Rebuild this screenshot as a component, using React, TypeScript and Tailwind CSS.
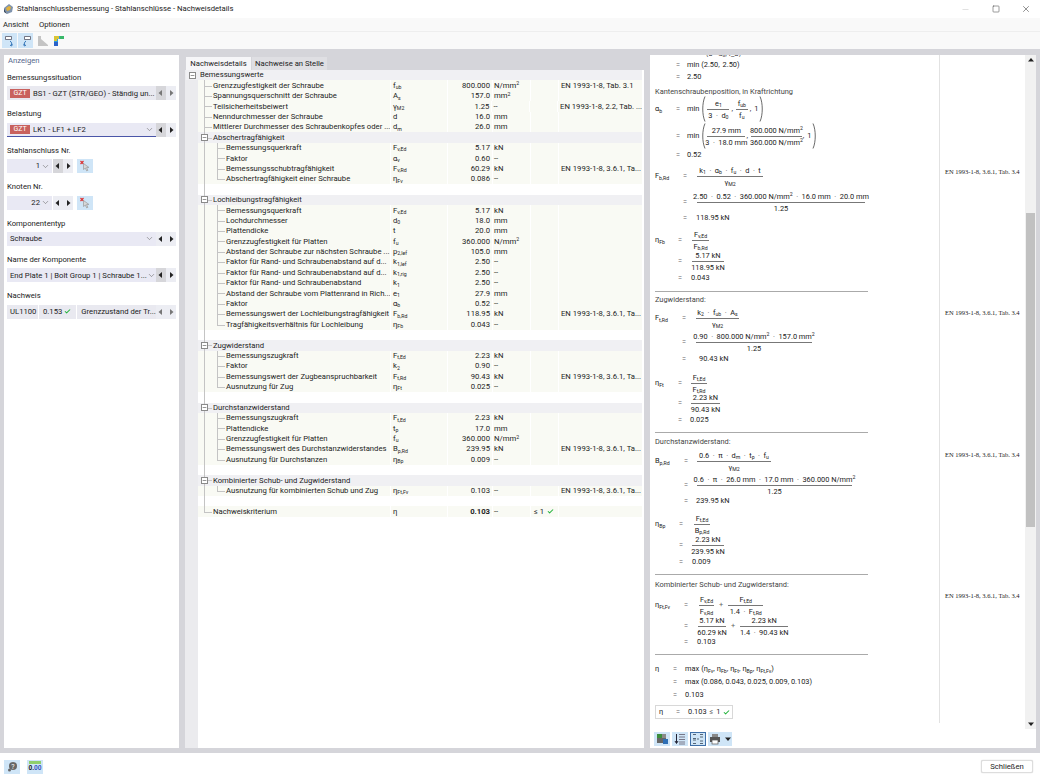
import React from 'react';
import { ChevronDown, Check, Minus, Square, X } from 'lucide-react';

// ─── Small helpers ───

const S = ({ b, s, className = '' }: { b: string; s?: string; className?: string }) => (
  <span className={className}>
    {b}
    {s && <sub className="text-[5.2px]">{s}</sub>}
  </span>
);

const Mm2 = () => (
  <span>
    N/mm<sup className="text-[5.2px]">2</sup>
  </span>
);

const Mm2Val = ({ v }: { v: string }) => (
  <span>
    {v} N/mm<sup className="text-[5.2px]">2</sup>
  </span>
);

const Tri = ({ dir, dim }: { dir: 'l' | 'r' | 'u' | 'd'; dim?: boolean }) => {
  const pts = { l: '5,1 5,7 1.5,4', r: '3,1 3,7 6.5,4', u: '1,5.5 7,5.5 4,2', d: '1,2.5 7,2.5 4,6' }[dir];
  return (
    <svg width="8" height="8" viewBox="0 0 8 8">
      <polygon points={pts} fill={dim ? '#777' : '#222'} />
    </svg>
  );
};

const Tick = ({ className = '' }: { className?: string }) => (
  <Check className={`h-[7px] w-[7px] shrink-0 text-[#22b33a] ${className}`} strokeWidth={3.5} />
);

// ─── Left panel ───

const Arrows = ({ dim, shaded }: { dim?: boolean; shaded?: boolean }) => (
  <div className="flex h-full">
    <div className={`flex w-[10px] items-center justify-center ${shaded ? 'bg-[#d6d6da]' : 'bg-[#ecedf3]'}`}>
      <Tri dir="l" dim={dim} />
    </div>
    <div className="flex w-[10px] items-center justify-center bg-[#ecedf3]">
      <Tri dir="r" dim={dim} />
    </div>
  </div>
);

const Gzt = () => (
  <span className="mr-[3px] flex h-[9px] w-[20px] shrink-0 items-center justify-center bg-[#c9615d] text-[7px] text-white">GZT</span>
);

const Chev = () => <ChevronDown className="h-[9px] w-[9px] shrink-0 text-[#666]" strokeWidth={1.5} />;

const PickBtn = () => (
  <div className="ml-[4px] flex h-full w-[16px] items-center justify-center bg-[#cfe5f7]">
    <svg width="12" height="12" viewBox="0 0 12 12">
      <path d="M1.500 1l3 3M4.500 1l-3 3" stroke="#d33" strokeWidth="1.200" />
      <path d="M4.500 3.500v6l1.800-1.400 1.400 2.800 1.200-.6-1.400-2.700 2.400-.2z" fill="#d8d8d8" stroke="#999" strokeWidth=".7" />
    </svg>
  </div>
);

const Field = ({ label, children }: { label: string; children: React.ReactNode }) => (
  <div className="h-[36.4px]">
    <div className="h-[14.4px] leading-[11px]">{label}</div>
    <div className="flex h-[14px] whitespace-nowrap">{children}</div>
  </div>
);

const LeftPanel = () => (
  <aside className="w-[175px] bg-white pl-[3px] pr-[3px] pt-[1px]">
    <div className="h-[16px] pl-[1px] leading-[10px] text-[#56688c]">Anzeigen</div>
    <Field label="Bemessungssituation">
      <div className="flex w-[149px] items-center bg-[#e9e9f0] pl-[3px]">
        <Gzt />
        <span>BS1 - GZT (STR/GEO) - Ständig un...</span>
      </div>
      <Arrows dim shaded />
    </Field>
    <Field label="Belastung">
      <div className="flex w-[149px] items-center justify-between border-b border-[#4a55a8] bg-[#e9e9f4] pl-[3px] pr-[2px]">
        <div className="flex items-center">
          <Gzt />
          <span>LK1 - LF1 + LF2</span>
        </div>
        <Chev />
      </div>
      <Arrows shaded />
    </Field>
    <Field label="Stahlanschluss Nr.">
      <div className="flex w-[45px] items-center justify-end bg-[#e9e9f4] pr-[2px]">
        <span className="mr-[1px]">1</span>
        <Chev />
      </div>
      <div className="w-[1px]" />
      <Arrows shaded />
      <PickBtn />
    </Field>
    <Field label="Knoten Nr.">
      <div className="flex w-[45px] items-center justify-end bg-[#e9e9f4] pr-[2px]">
        <span className="mr-[1px]">22</span>
        <Chev />
      </div>
      <div className="w-[1px]" />
      <Arrows />
      <PickBtn />
    </Field>
    <Field label="Komponententyp">
      <div className="flex w-[149px] items-center justify-between bg-[#e9e9f4] pl-[3px] pr-[2px]">
        <span>Schraube</span>
        <Chev />
      </div>
      <Arrows />
    </Field>
    <Field label="Name der Komponente">
      <div className="flex w-[149px] items-center justify-between bg-[#e9e9f4] pl-[3px] pr-[2px]">
        <span>End Plate 1 | Bolt Group 1 | Schraube 1...</span>
        <Chev />
      </div>
      <Arrows shaded />
    </Field>
    <Field label="Nachweis">
      <div className="flex w-[149px] items-center bg-[#e9e9f0]">
        <span className="h-full w-[32px] border-r border-white pl-[3px] leading-[14px]">UL1100</span>
        <span className="ml-[4px]">0.153</span>
        <Tick className="ml-[2px]" />
        <span className="ml-[5px] h-full border-l border-white pl-[4px] leading-[14px]">Grenzzustand der Tr...</span>
      </div>
      <Arrows dim />
    </Field>
  </aside>
);

// ─── Result tree ───

type Row = {
  kind: 'group' | 'item' | 'blank' | 'root';
  name?: string;
  sym?: React.ReactNode;
  val?: string;
  unit?: React.ReactNode;
  ref?: string;
  last?: boolean;
  bold?: boolean;
  limit?: boolean;
};

const item = (name: string, sym: React.ReactNode, val: string, unit: React.ReactNode, ref?: string, last?: boolean): Row => ({
  kind: 'item', name, sym, val, unit, ref, last,
});
const group = (name: string): Row => ({ kind: 'group', name });
const blank: Row = { kind: 'blank' };
const REF = 'EN 1993-1-8, 3.6.1, Ta...';

const rows: Row[] = [
  { kind: 'root', name: 'Grenzzugfestigkeit der Schraube', sym: <S b="f" s="ub" />, val: '800.000', unit: <Mm2 />, ref: 'EN 1993-1-8, Tab. 3.1' },
  { kind: 'root', name: 'Spannungsquerschnitt der Schraube', sym: <S b="A" s="s" />, val: '157.0', unit: <span>mm<sup className="text-[5.2px]">2</sup></span> },
  { kind: 'root', name: 'Teilsicherheitsbeiwert', sym: <S b="γ" s="M2" />, val: '1.25', unit: '--', ref: 'EN 1993-1-8, 2.2, Tab. ...' },
  { kind: 'root', name: 'Nenndurchmesser der Schraube', sym: 'd', val: '16.0', unit: 'mm' },
  { kind: 'root', name: 'Mittlerer Durchmesser des Schraubenkopfes oder ...', sym: <S b="d" s="m" />, val: '26.0', unit: 'mm' },
  group('Abschertragfähigkeit'),
  item('Bemessungsquerkraft', <S b="F" s="v,Ed" />, '5.17', 'kN'),
  item('Faktor', <S b="α" s="v" />, '0.60', '--'),
  item('Bemessungsschubtragfähigkeit', <S b="F" s="v,Rd" />, '60.29', 'kN', REF),
  item('Abschertragfähigkeit einer Schraube', <S b="η" s="Fv" />, '0.086', '--', undefined, true),
  blank,
  group('Lochleibungstragfähigkeit'),
  item('Bemessungsquerkraft', <S b="F" s="v,Ed" />, '5.17', 'kN'),
  item('Lochdurchmesser', <S b="d" s="0" />, '18.0', 'mm'),
  item('Plattendicke', 't', '20.0', 'mm'),
  item('Grenzzugfestigkeit für Platten', <S b="f" s="u" />, '360.000', <Mm2 />),
  item('Abstand der Schraube zur nächsten Schraube ...', <S b="p" s="2,lef" />, '105.0', 'mm'),
  item('Faktor für Rand- und Schraubenabstand auf d...', <S b="k" s="1,lef" />, '2.50', '--'),
  item('Faktor für Rand- und Schraubenabstand auf d...', <S b="k" s="1,rig" />, '2.50', '--'),
  item('Faktor für Rand- und Schraubenabstand', <S b="k" s="1" />, '2.50', '--'),
  item('Abstand der Schraube vom Plattenrand in Rich...', <S b="e" s="1" />, '27.9', 'mm'),
  item('Faktor', <S b="α" s="b" />, '0.52', '--'),
  item('Bemessungswert der Lochleibungstragfähigkeit', <S b="F" s="b,Rd" />, '118.95', 'kN', REF),
  item('Tragfähigkeitsverhältnis für Lochleibung', <S b="η" s="Fb" />, '0.043', '--', undefined, true),
  blank,
  group('Zugwiderstand'),
  item('Bemessungszugkraft', <S b="F" s="t,Ed" />, '2.23', 'kN'),
  item('Faktor', <S b="k" s="2" />, '0.90', '--'),
  item('Bemessungswert der Zugbeanspruchbarkeit', <S b="F" s="t,Rd" />, '90.43', 'kN', REF),
  item('Ausnutzung für Zug', <S b="η" s="Ft" />, '0.025', '--', undefined, true),
  blank,
  group('Durchstanzwiderstand'),
  item('Bemessungszugkraft', <S b="F" s="t,Ed" />, '2.23', 'kN'),
  item('Plattendicke', <S b="t" s="p" />, '17.0', 'mm'),
  item('Grenzzugfestigkeit für Platten', <S b="f" s="u" />, '360.000', <Mm2 />),
  item('Bemessungswert des Durchstanzwiderstandes', <S b="B" s="p,Rd" />, '239.95', 'kN', REF),
  item('Ausnutzung für Durchstanzen', <S b="η" s="Bp" />, '0.009', '--', undefined, true),
  blank,
  group('Kombinierter Schub- und Zugwiderstand'),
  item('Ausnutzung für kombinierten Schub und Zug', <S b="η" s="Ft,Fv" />, '0.103', '--', REF, true),
  blank,
  { kind: 'root', name: 'Nachweiskriterium', sym: 'η', val: '0.103', unit: '--', bold: true, limit: true, last: true },
];

const Toggle = () => (
  <span className="relative z-10 flex h-[7px] w-[7px] items-center justify-center border border-[#8a8a8a] bg-white">
    <Minus className="h-[5px] w-[5px] text-[#333]" strokeWidth={2.5} />
  </span>
);

// one tree guide column, 13px wide, with the vertical line at 6px
const Guide = ({ end, branch, children }: { end?: boolean; branch?: boolean; children?: React.ReactNode }) => (
  <span className="relative flex h-full w-[13px] shrink-0 items-center justify-center">
    <span className={`absolute left-[6px] top-0 w-px bg-[#c4c4c4] ${end ? 'h-1/2' : 'h-full'}`} />
    {branch && <span className="absolute left-[6px] top-1/2 h-px w-[8px] bg-[#c4c4c4]" />}
    {children}
  </span>
);

const TreeRow = ({ row }: { row: Row }) => {
  if (row.kind === 'blank') {
    return (
      <div className="h-[10.4px]">
        <Guide />
      </div>
    );
  }
  if (row.kind === 'group') {
    return (
      <div className="flex h-[10.4px] items-center bg-[#f0f0f3]">
        <Guide branch>
          <Toggle />
        </Guide>
        <span className="ml-[2px] whitespace-nowrap">{row.name}</span>
      </div>
    );
  }
  const cell = 'border-l border-white h-full flex items-center';
  return (
    <div className="flex h-[10.4px] items-center bg-[#f9faf4]">
      <div className="flex h-full w-[192px] shrink-0 items-center">
        <Guide end={row.kind === 'root' && row.last} branch={row.kind === 'root'} />
        {row.kind === 'item' && <Guide end={row.last} branch />}
        <span className="ml-[2px] whitespace-nowrap">{row.name}</span>
      </div>
      <div className={`${cell} w-[57px] pl-[2px]`}>{row.sym}</div>
      <div className={`${cell} w-[45px] justify-end pr-[2px] ${row.bold ? 'font-bold' : ''}`}>{row.val}</div>
      <div className={`${cell} w-[38px] pl-[1px]`}>{row.unit}</div>
      <div className={`${cell} w-[28px] pl-[3px]`}>
        {row.limit && (
          <>
            ≤ 1
            <Tick className="ml-[3px]" />
          </>
        )}
      </div>
      <div className={`${cell} flex-1 whitespace-nowrap pl-[2px]`}>{row.ref}</div>
    </div>
  );
};

const MiddlePanel = () => (
  <section className="flex w-[459px] flex-col">
    <div className="flex h-[15px] items-end whitespace-nowrap pl-[1px]">
      <div className="flex h-[13px] w-[65px] items-center justify-center bg-[#f6f6f8]">Nachweisdetails</div>
      <div className="ml-[1px] flex h-[13px] w-[75px] items-center justify-center bg-[#dfdfe3]">Nachweise an Stelle</div>
    </div>
    <div className="flex flex-1 bg-white">
      <div className="w-[13px] bg-[#ebebee]" />
      <div className="w-[444px]">
        {/* the first header starts in the gutter */}
        <div className="-ml-[12px] flex h-[10.4px] items-center bg-[#f0f0f3] pl-[3px]">
          <Toggle />
          <span className="ml-[4px]">Bemessungswerte</span>
        </div>
        {rows.map((r, i) => (
          <TreeRow key={i} row={r} />
        ))}
      </div>
    </div>
  </section>
);

// ─── Formula view ───

const Frac = ({ n, d, w }: { n: React.ReactNode; d: React.ReactNode; w: string }) => (
  <span className={`inline-flex shrink-0 flex-col items-center ${w}`}>
    <span className="h-[10px] whitespace-nowrap leading-[10px]">{n}</span>
    <span className="h-px w-full bg-[#777]" />
    <span className="h-[10px] whitespace-nowrap leading-[12px]">{d}</span>
  </span>
);

const Line = ({ mt, a, b, sym, children }: { mt: string; a: string; b: string; sym?: React.ReactNode; children: React.ReactNode }) => (
  <div className={`flex h-0 items-center whitespace-nowrap ${mt}`}>
    <span className={`shrink-0 ${a}`}>{sym}</span>
    <span className={`shrink-0 text-[#666] ${b}`}>=</span>
    {children}
  </div>
);

const Note = ({ mt, children }: { mt: string; children: React.ReactNode }) => (
  <div className={`flex h-0 items-center whitespace-nowrap text-[#444] ${mt}`}>{children}</div>
);

const Hr = ({ mt }: { mt: string }) => <div className={`h-px w-[213px] bg-[#aaa] ${mt}`} />;

const Dot = () => <span className="mx-[3.5px] text-[#666]">·</span>;

const Comma = () => <span className="mr-[3px]">,</span>;

const Paren = ({ flip }: { flip?: boolean }) => (
  <svg width="5" height="26" viewBox="0 0 5 26" className={`shrink-0 ${flip ? '-scale-x-100' : ''}`}>
    <path d="M4 .5C1 7 1 19 4 25.500" fill="none" stroke="#444" strokeWidth=".8" />
  </svg>
);

const Sub = ({ children }: { children: string }) => <sub className="text-[5.2px]">{children}</sub>;

const Formulas = () => (
  <div className="w-[289px] overflow-hidden pl-[5px] text-[7.4px] text-[#222]">
    <div className="flex h-[2px] items-end overflow-hidden pl-[51px] leading-none text-[#444]">(3 · d₀, f_u)</div>
    <Line mt="mt-[8px]" a="w-[21px]" b="w-[11px]">min (2.50,<span className="ml-[3px]">2.50)</span></Line>
    <Line mt="mt-[12px]" a="w-[21px]" b="w-[11px]">2.50</Line>
    <Note mt="mt-[15px]">Kantenschraubenposition, in Kraftrichtung</Note>

    <Line mt="mt-[17px]" a="w-[21px]" b="w-[11px]" sym={<S b="α" s="b" />}>
      min
      <span className="ml-[2px]" />
      <Paren />
      <span className="ml-[1px]" />
      <Frac w="w-[22px]" n={<S b="e" s="1" />} d={<span>3<Dot /><S b="d" s="0" /></span>} />
      <span className="ml-[2px]" /><Comma />
      <Frac w="w-[12px]" n={<S b="f" s="ub" />} d={<S b="f" s="u" />} />
      <span className="ml-[2px]" /><Comma />1
      <span className="ml-[1px]" />
      <Paren flip />
    </Line>
    <Line mt="mt-[27px]" a="w-[21px]" b="w-[11px]">
      min
      <span className="ml-[2px]" />
      <Paren />
      <span className="ml-[1px]" />
      <Frac w="w-[38px]" n="27.9 mm" d={<span>3<Dot />18.0 mm</span>} />
      <span className="ml-[1px]" /><Comma />
      <Frac w="w-[51px]" n={<Mm2Val v="800.000" />} d={<Mm2Val v="360.000" />} />
      <span className="ml-[1px]" /><Comma />1
      <span className="ml-[1px]" />
      <Paren flip />
    </Line>
    <Line mt="mt-[19px]" a="w-[21px]" b="w-[11px]">0.52</Line>

    <Line mt="mt-[21px]" a="w-[28px]" b="w-[14px]" sym={<S b="F" s="b,Rd" />}>
      <Frac w="w-[66px]" n={<span>k<Sub>1</Sub><Dot />α<Sub>b</Sub><Dot />f<Sub>u</Sub><Dot />d<Dot />t</span>} d={<S b="γ" s="M2" />} />
    </Line>
    <Line mt="mt-[26px]" a="w-[28px]" b="w-[14px]">
      <Frac w="w-[168px]" n={<span>2.50<Dot />0.52<Dot /><Mm2Val v="360.000" /><Dot />16.0 mm<Dot />20.0 mm</span>} d="1.25" />
    </Line>
    <Line mt="mt-[16px]" a="w-[28px]" b="w-[13px]">118.95 kN</Line>

    <Line mt="mt-[22px]" a="w-[23px]" b="w-[14px]" sym={<S b="η" s="Fb" />}>
      <Frac w="w-[17px]" n={<S b="F" s="v,Ed" />} d={<S b="F" s="b,Rd" />} />
    </Line>
    <Line mt="mt-[21px]" a="w-[23px]" b="w-[14px]">
      <Frac w="w-[32px]" n="5.17 kN" d="118.95 kN" />
    </Line>
    <Line mt="mt-[17px]" a="w-[23px]" b="w-[13px]">0.043</Line>
    <Hr mt="mt-[13px]" />

    <Note mt="mt-[8px]">Zugwiderstand:</Note>
    <Line mt="mt-[18px]" a="w-[27px]" b="w-[14px]" sym={<S b="F" s="t,Rd" />}>
      <Frac w="w-[43px]" n={<span>k<Sub>2</Sub><Dot />f<Sub>ub</Sub><Dot />A<Sub>s</Sub></span>} d={<S b="γ" s="M2" />} />
    </Line>
    <Line mt="mt-[24px]" a="w-[27px]" b="w-[14px]">
      <Frac w="w-[116px]" n={<span>0.90<Dot /><Mm2Val v="800.000" /><Dot />157.0 mm<sup className="text-[5.2px]">2</sup></span>} d="1.25" />
    </Line>
    <Line mt="mt-[17px]" a="w-[27px]" b="w-[17px]">90.43 kN</Line>

    <Line mt="mt-[24px]" a="w-[23px]" b="w-[13px]" sym={<S b="η" s="Ft" />}>
      <Frac w="w-[16px]" n={<S b="F" s="t,Ed" />} d={<S b="F" s="t,Rd" />} />
    </Line>
    <Line mt="mt-[20px]" a="w-[23px]" b="w-[13px]">
      <Frac w="w-[29px]" n="2.23 kN" d="90.43 kN" />
    </Line>
    <Line mt="mt-[17px]" a="w-[23px]" b="w-[12px]">0.025</Line>
    <Hr mt="mt-[12px]" />

    <Note mt="mt-[9px]">Durchstanzwiderstand:</Note>
    <Line mt="mt-[19px]" a="w-[29px]" b="w-[13px]" sym={<S b="B" s="p,Rd" />}>
      <Frac w="w-[74px]" n={<span>0.6<Dot />π<Dot />d<Sub>m</Sub><Dot />t<Sub>p</Sub><Dot />f<Sub>u</Sub></span>} d={<S b="γ" s="M2" />} />
    </Line>
    <Line mt="mt-[24px]" a="w-[29px]" b="w-[13px]">
      <Frac w="w-[155px]" n={<span>0.6<Dot />π<Dot />26.0 mm<Dot />17.0 mm<Dot /><Mm2Val v="360.000" /></span>} d="1.25" />
    </Line>
    <Line mt="mt-[16px]" a="w-[29px]" b="w-[12px]">239.95 kN</Line>

    <Line mt="mt-[23px]" a="w-[24px]" b="w-[15px]" sym={<S b="η" s="Bp" />}>
      <Frac w="w-[16px]" n={<S b="F" s="t,Ed" />} d={<S b="B" s="p,Rd" />} />
    </Line>
    <Line mt="mt-[21px]" a="w-[24px]" b="w-[13px]">
      <Frac w="w-[32px]" n="2.23 kN" d="239.95 kN" />
    </Line>
    <Line mt="mt-[17px]" a="w-[24px]" b="w-[13px]">0.009</Line>
    <Hr mt="mt-[12px]" />

    <Note mt="mt-[10px]">Kombinierter Schub- und Zugwiderstand:</Note>
    <Line mt="mt-[20px]" a="w-[29px]" b="w-[15px]" sym={<S b="η" s="Ft,Fv" />}>
      <Frac w="w-[15px]" n={<S b="F" s="v,Ed" />} d={<S b="F" s="v,Rd" />} />
      <span className="mx-[5px] text-[#666]">+</span>
      <Frac w="w-[35px]" n={<S b="F" s="t,Ed" />} d={<span>1.4<Dot /><S b="F" s="t,Rd" /></span>} />
    </Line>
    <Line mt="mt-[21px]" a="w-[29px]" b="w-[14px]">
      <Frac w="w-[28px]" n="5.17 kN" d="60.29 kN" />
      <span className="mx-[5px] text-[#666]">+</span>
      <Frac w="w-[48px]" n="2.23 kN" d={<span>1.4<Dot />90.43 kN</span>} />
    </Line>
    <Line mt="mt-[16px]" a="w-[29px]" b="w-[13px]">0.103</Line>
    <Hr mt="mt-[12px]" />

    <Line mt="mt-[14px]" a="w-[18px]" b="w-[12px]" sym="η">
      max
      <span className="ml-[2px]">
        (<S b="η" s="Fv" />,<span className="ml-[2px]"><S b="η" s="Fb" /></span>,<span className="ml-[2px]"><S b="η" s="Ft" /></span>,<span className="ml-[2px]"><S b="η" s="Bp" /></span>,<span className="ml-[2px]"><S b="η" s="Ft,Fv" /></span>)
      </span>
    </Line>
    <Line mt="mt-[13px]" a="w-[18px]" b="w-[12px]">max (0.086,  0.043,  0.025,  0.009,  0.103)</Line>
    <Line mt="mt-[13px]" a="w-[18px]" b="w-[12px]">0.103</Line>
    <div className="mt-[10px] flex h-[14px] w-[78px] items-center whitespace-nowrap border border-[#d8d8d8] pl-[3px]">
      <span className="w-[17px]">η</span>
      <span className="w-[12px] text-[#666]">=</span>
      <span>0.103</span>
      <span className="mx-[3px] text-[#666]">≤</span>
      <span>1</span>
      <Tick className="ml-[2px]" />
    </div>
  </div>
);

const RefCol = () => (
  <div className="h-[668px] w-[86px] border-l border-[#e2e2e2] pl-[5px] font-['Liberation_Serif',serif] text-[6.5px] text-[#222]">
    <div className="mt-[117px] flex h-0 items-center whitespace-nowrap">EN 1993-1-8, 3.6.1, Tab. 3.4</div>
    <div className="mt-[141px] flex h-0 items-center whitespace-nowrap">EN 1993-1-8, 3.6.1, Tab. 3.4</div>
    <div className="mt-[142px] flex h-0 items-center whitespace-nowrap">EN 1993-1-8, 3.6.1, Tab. 3.4</div>
    <div className="mt-[141px] flex h-0 items-center whitespace-nowrap">EN 1993-1-8, 3.6.1, Tab. 3.4</div>
  </div>
);

const Scrollbar = () => (
  <div className="flex h-[674px] w-[11px] flex-col items-center bg-[#f1f1f1]">
    <div className="flex h-[10px] items-center">
      <Tri dir="u" />
    </div>
    <div className="mt-[148px] h-[314px] w-[9px] bg-[#c1c1c1]" />
    <div className="flex-1" />
    <div className="flex h-[10px] items-center">
      <Tri dir="d" />
    </div>
  </div>
);

const ToolIcon = ({ active, wide, children }: { active?: boolean; wide?: boolean; children: React.ReactNode }) => (
  <div className={`mr-[2px] flex h-[14px] items-center justify-center bg-[#cfe5f7] ${wide ? 'w-[24px]' : 'w-[16px]'} ${active ? 'border border-[#3f6fa8]' : ''}`}>
    {children}
  </div>
);

const RightPanel = () => (
  <section className="flex w-[386px] flex-col bg-white">
    <div className="flex overflow-hidden">
      <Formulas />
      <RefCol />
      <Scrollbar />
    </div>
    <div className="flex pl-[4px] pt-[3px]">
      <ToolIcon>
        <svg width="13" height="12" viewBox="0 0 13 12">
          <rect x="1" y="1" width="5" height="4" fill="#3c8d3c" />
          <rect x="6" y="1" width="4" height="4" fill="#8a8a8a" />
          <rect x="1" y="5" width="9" height="5" fill="#666" />
          <rect x="7" y="6" width="5" height="5" fill="#2f6fb5" />
        </svg>
      </ToolIcon>
      <ToolIcon>
        <svg width="12" height="12" viewBox="0 0 12 12" stroke="#778" strokeWidth="1">
          <path d="M5 1.500h6M5 4h6M5 6.500h6M5 9h6M5 11h6" />
          <path d="M2.500 1v9" stroke="#223" />
          <path d="M1 8l1.500 2.500L4 8" fill="none" stroke="#223" />
        </svg>
      </ToolIcon>
      <ToolIcon active>
        <svg width="12" height="12" viewBox="0 0 12 12" stroke="#567" strokeWidth="1" fill="none">
          <path d="M1 1.500h3M1 5.500h3M1 7h3M1 10.500h3M8 1.500h3M8 4h3M8 8h3M8 10.500h3" />
          <path d="M5 6h2" />
        </svg>
      </ToolIcon>
      <ToolIcon wide>
        <svg width="12" height="12" viewBox="0 0 12 12">
          <rect x="3" y="1" width="6" height="3" fill="#888" />
          <rect x="1" y="4" width="10" height="5" fill="#555" />
          <rect x="3" y="7" width="6" height="4" fill="#fff" stroke="#555" strokeWidth=".7" />
        </svg>
        <span className="ml-[3px]">
          <Tri dir="d" />
        </span>
      </ToolIcon>
    </div>
  </section>
);

// ─── App ───

export default function App() {
  return (
    <div className="flex h-[780px] w-[1040px] flex-col overflow-hidden bg-white font-['Roboto',sans-serif] text-[7.7px] text-[#1c1c1c]">
      <header className="flex h-[18px] items-center justify-between bg-white pl-[3px]">
        <div className="flex items-center">
          <svg width="11" height="11" viewBox="0 0 11 11">
            <path d="M1 5l5-4 4 3-1 5-5 2z" fill="#7f93ad" />
            <path d="M3 5l3-2 2 1-1 3-3 1z" fill="#e3b23c" />
            <path d="M1 5l3 6-3-2z" fill="#3d4f66" />
          </svg>
          <span className="ml-[3px]">Stahlanschlussbemessung - Stahlanschlüsse - Nachweisdetails</span>
        </div>
        <div className="flex items-center">
          <Minus className="mr-[22px] h-[9px] w-[9px] text-[#bbb]" strokeWidth={1.2} />
          <Square className="mr-[21px] h-[8px] w-[8px] text-[#444]" strokeWidth={1.6} />
          <X className="mr-[9px] h-[10px] w-[10px] text-[#444]" strokeWidth={1.4} />
        </div>
      </header>
      <nav className="flex h-[13px] items-center bg-[#f9f9f9] pl-[3px]">
        <span>Ansicht</span>
        <span className="ml-[10px]">Optionen</span>
      </nav>
      <div className="flex h-[18px] items-center border-t border-[#eeeeee] bg-[#f9f9f9] pl-[2px]">
        <div className="flex h-[15px] w-[15px] items-center justify-center bg-[#cfe5f7]">
          <svg width="12" height="12" viewBox="0 0 12 12" fill="none">
            <path d="M1.500 1.500h6v3h-6z" fill="#fff" stroke="#556" strokeWidth=".8" />
            <path d="M6 6c1.500 1 2 2.500 1.500 4M6 10l1.500 1 1-1.500" stroke="#2a6fb5" strokeWidth="1" />
          </svg>
        </div>
        <div className="ml-px flex h-[15px] w-[15px] items-center justify-center bg-[#cfe5f7]">
          <svg width="12" height="12" viewBox="0 0 12 12" fill="none">
            <path d="M4.500 1.500h6v3h-6z" fill="#fff" stroke="#556" strokeWidth=".8" />
            <path d="M6 6C4.500 7 4 8.500 4.500 10M6 10l-1.500 1-1-1.500" stroke="#2a6fb5" strokeWidth="1" />
          </svg>
        </div>
        <div className="ml-[4px] flex h-[15px] w-[12px] items-center justify-center">
          <svg width="12" height="12" viewBox="0 0 12 12">
            <path d="M1 1h3v3l7 6v1H1z" fill="#c4c4c4" />
          </svg>
        </div>
        <div className="ml-[4px] flex h-[15px] w-[12px] items-center justify-center">
          <svg width="12" height="12" viewBox="0 0 12 12">
            <path d="M1 1h10v3H5v7H1z" fill="#2f9fd8" />
            <path d="M1 1h5v3H4v2H1z" fill="#d9c436" />
            <path d="M1 7h4v4H1z" fill="#2b62c9" />
            <path d="M7 1h4v3H7z" fill="#39b86a" />
          </svg>
        </div>
      </div>
      <main className="flex flex-1 gap-[6px] bg-[#d5d5da] pb-[5px] pl-[4px] pr-[4px] pt-[6px]">
        <LeftPanel />
        <MiddlePanel />
        <RightPanel />
      </main>
      <footer className="flex h-[27px] items-center justify-between bg-white pl-[4px] pr-[6px]">
        <div className="flex gap-[7px]">
          <div className="flex h-[14px] w-[16px] items-center justify-center bg-[#cfe5f7]">
            <svg width="11" height="11" viewBox="0 0 11 11">
              <circle cx="6" cy="5" r="4" fill="#666" />
              <circle cx="2.500" cy="9" r="1.500" fill="#666" />
              <text x="6" y="7.500" fontSize="7" textAnchor="middle" fill="#fff">?</text>
            </svg>
          </div>
          <div className="flex h-[14px] w-[16px] flex-col items-center bg-[#cfe5f7]">
            <span className="mt-px h-[3px] w-[12px] bg-[#8fcf6a]" />
            <span className="text-[6.5px] font-bold leading-[8px]">
              0.<span className="text-[#3355bb]">00</span>
            </span>
          </div>
        </div>
        <button className="mr-[1px] h-[13px] w-[52px] rounded-[2px] border border-[#dddddd] bg-white shadow-[0_0_1px_#bbb]">Schließen</button>
      </footer>
    </div>
  );
}
